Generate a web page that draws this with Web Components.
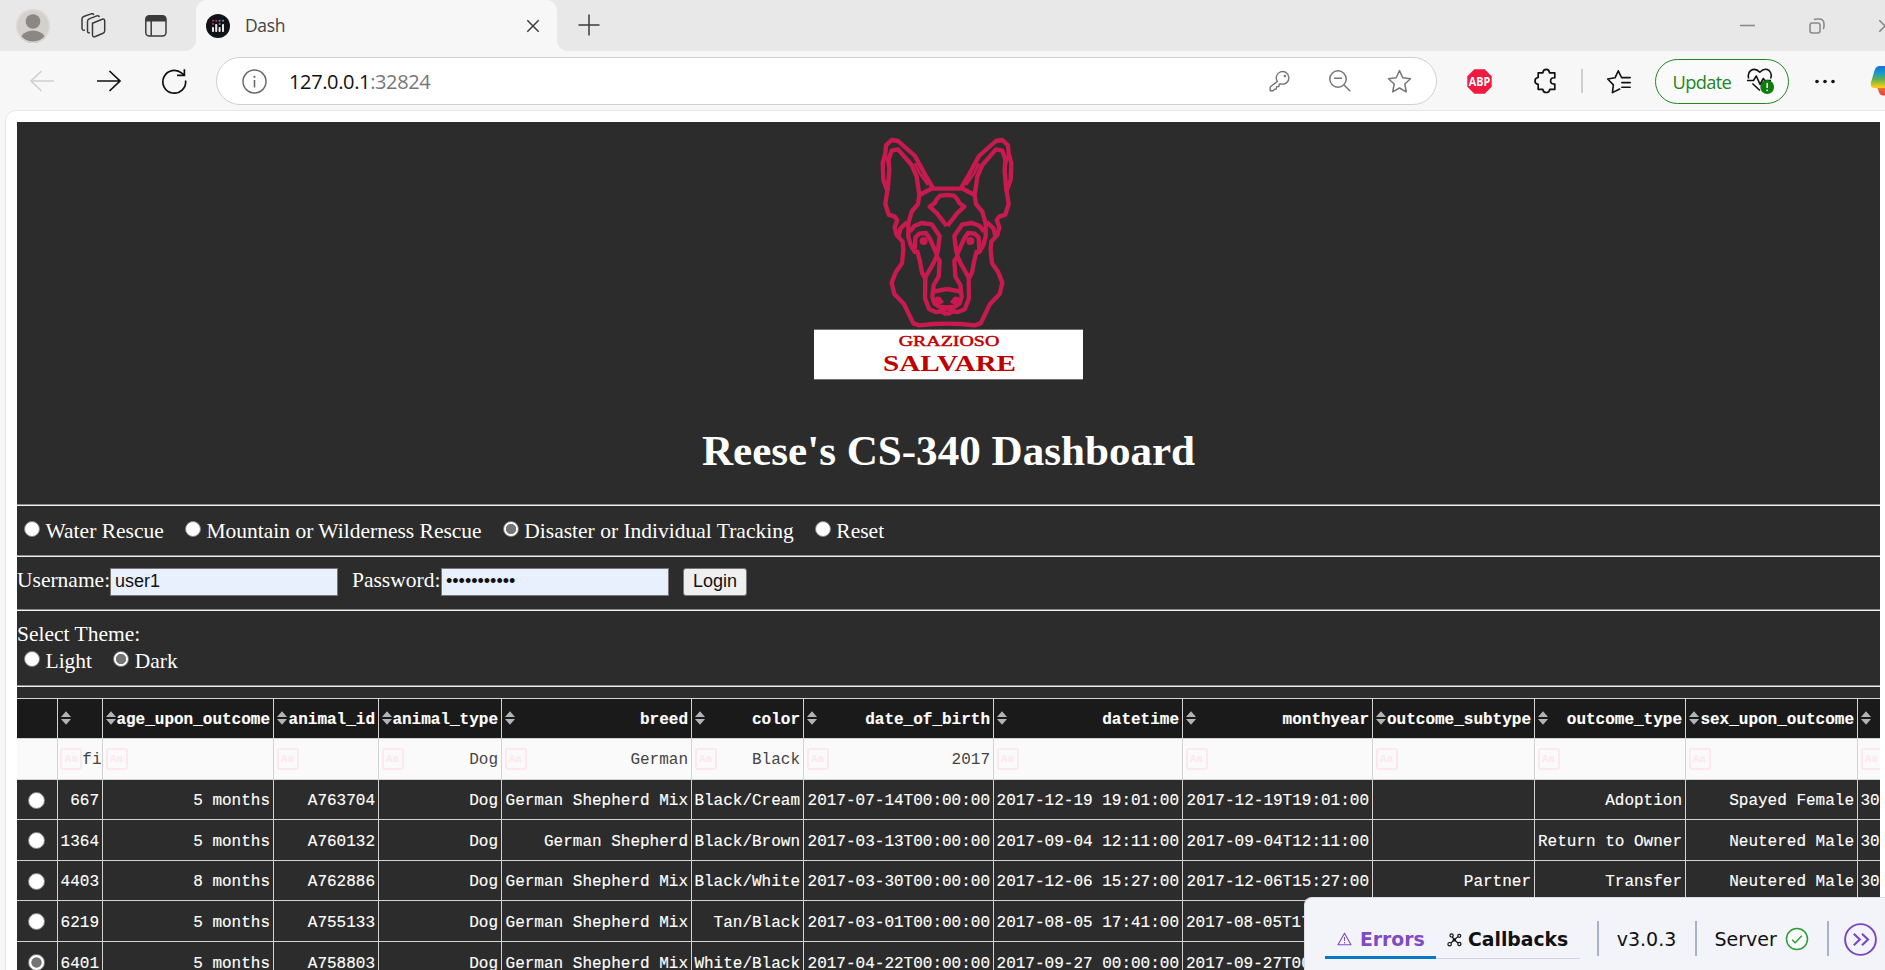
<!DOCTYPE html>
<html lang="en">
<head>
<meta charset="utf-8">
<title>Dash</title>
<style>
html,body{margin:0;width:1885px;height:970px;overflow:hidden;background:#f7f7f7}
</style>
</head>
<body>
<browser-window></browser-window>
<script>
const define = (name, html, init) => customElements.define(name, class extends HTMLElement {
  constructor() {
    super();
    this.attachShadow({mode: 'open'});
  }
  connectedCallback() {
    const t = document.createElement('template');
    t.innerHTML = typeof html === 'function' ? html(this) : html;
    this.shadowRoot.replaceChildren(t.content.cloneNode(true));
    if (init) init(this);
  }
});

/* Icons: [width, height, markup] */
const ICONS = {
  avatar: [34, 34, `<clipPath id="c"><circle cx="17" cy="17" r="17"/></clipPath><g clip-path="url(#c)"><rect width="34" height="34" fill="#d3d1cd"/><circle cx="17" cy="12.5" r="7.3" fill="#8c8783"/><ellipse cx="17" cy="31" rx="12.5" ry="9.5" fill="#8c8783"/></g><circle cx="17" cy="17" r="16.3" fill="none" stroke="#dedcd8" stroke-width="1.4"/>`],
  spaces: [27, 26, `<g fill="none" stroke="#3b3b3b" stroke-width="1.5" stroke-linejoin="round" stroke-linecap="round"><path d="M12.5 10.2l9.7-3.9q2.5-.8 2.5 1.6v9.8q0 1.8-1.7 2.6l-7.6 3.2q-2.9 1-2.9-1.7z"/><path d="M9.3 19.8q-1.8.2-1.8-2V8.5q0-1.8 1.7-2.6l7.6-3q1.6-.6 2.3.6"/><path d="M4.3 17.2q-2.3.2-2.3-2.2V5.9q0-1.8 1.7-2.4l7.3-2.6q1.7-.6 2.5.5"/></g>`],
  panel: [22, 22, `<rect x=".8" y=".8" width="20.2" height="20.2" rx="3.4" fill="none" stroke="#3b3b3b" stroke-width="1.5"/><path d="M1 6.6V4Q1 1 4 1h14q3 0 3 3v2.6z" fill="#3b3b3b"/><path d="M6.2 6v15" stroke="#3b3b3b" stroke-width="1.5"/>`],
  dash: [24, 24, `<circle cx="12" cy="12" r="12" fill="#111316"/><g fill="#e8e8ea"><rect x="6" y="13" width="2" height="5" rx=".7"/><rect x="9.2" y="10" width="2" height="8" rx=".7"/><rect x="12.6" y="13" width="2" height="5" rx=".7"/><rect x="16" y="10" width="2" height="8" rx=".7"/></g><g fill="#c02e62"><circle cx="7" cy="6.8" r="1"/><circle cx="10.2" cy="6.8" r="1"/><circle cx="7" cy="10" r="1"/></g><g fill="#8a76c0"><circle cx="13.6" cy="6.8" r="1"/><circle cx="13.6" cy="10" r="1"/></g><circle cx="17" cy="6.8" r="1" fill="#4aa5d0"/>`],
  close: [14, 14, `<path d="M1.3 1.3l11.4 11.4M12.7 1.3L1.3 12.7" stroke="#3b3b3b" stroke-width="1.5"/>`],
  plus: [22, 22, `<path d="M11 .5v21M.5 11h21" stroke="#3b3b3b" stroke-width="1.5"/>`],
  min: [15, 15, `<path d="M0 7.5h15" stroke="#8b8b8b" stroke-width="1.6"/>`],
  restore: [16, 16, `<g fill="none" stroke="#8b8b8b" stroke-width="1.6"><rect x="1" y="5" width="10" height="10" rx="2.2"/><path d="M5 1.5Q6 1 8 1h2q5 0 5 5v2q0 2-.8 3"/></g>`],
  back: [26, 22, `<path d="M25 11H2M12.5 1L2 11l10.5 10" fill="none" stroke="#d0d0d0" stroke-width="1.6"/>`],
  forward: [26, 22, `<path d="M1 11h23M13.5 1L24 11 13.5 21" fill="none" stroke="#111" stroke-width="1.7"/>`],
  reload: [26, 26, `<path d="M24.6 12.5A11.4 11.4 0 1 1 20.8 5.2L23.6 7.2M23.4 1.2V7.4H16" fill="none" stroke="#111" stroke-width="1.7"/>`],
  info: [25, 25, `<circle cx="12.5" cy="12.5" r="11.5" fill="none" stroke="#6a6a6a" stroke-width="1.5"/><circle cx="12.5" cy="7.8" r="1.1" fill="#6a6a6a"/><path d="M12.5 11v7.5" stroke="#6a6a6a" stroke-width="1.6"/>`],
  key: [22, 22, `<path d="M8.4 11.4A6.3 6.3 0 1 1 12.3 14L10.4 14l-.6 2.6-2.2.2-.3 2.2-1.8.3-1.4 1.5H1.2V17z" fill="none" stroke="#767676" stroke-width="1.4" stroke-linejoin="round"/><circle cx="15.9" cy="6" r="1.3" fill="#767676"/>`],
  zoomout: [22, 22, `<g fill="none" stroke="#767676" stroke-width="1.5"><circle cx="9" cy="9" r="8.2"/><path d="M5 8.3h8M14.8 14.8l6.5 6.5"/></g>`],
  star: [25, 25, `<path d="M12.5 1.6l3.3 7.1 7.7 1-5.7 5.3 1.5 7.8-6.8-3.8-6.8 3.8 1.5-7.8L1.5 9.7l7.7-1z" fill="none" stroke="#767676" stroke-width="1.5" stroke-linejoin="round"/>`],
  abp: [25, 25, `<path d="M7.3.3h10.4l7 7v10.4l-7 7H7.3l-7-7V7.3z" fill="#f0193f"/><text x="12.5" y="17" text-anchor="middle" textLength="21.5" lengthAdjust="spacingAndGlyphs" font-family="Open Sans,sans-serif" font-weight="700" font-size="12.5" fill="#fff">ABP</text>`],
  puzzle: [24, 26, `<path d="M4.2 4.8h4.6q.4-3.5 3.4-3.5t3.4 3.5h5.2v5q-4.2-.4-4.2 3.1t4.2 3.1v5.3h-5q-.6 3.2-3.6 3.2t-3.4-3.2H4.2v-5q-3.2-.5-3.2-3.4t3.2-3.4z" fill="none" stroke="#111" stroke-width="1.7" stroke-linejoin="round"/>`],
  favs: [26, 25, `<g fill="none" stroke="#111" stroke-width="1.6" stroke-linejoin="round" stroke-linecap="round"><path d="M13.7 20l-7.3 3.6 1-7.7L1.7 10l7.3-1.2 3.3-7 3.2 6.7"/><path d="M15.8 8.6h8.4M15.8 13.6h8.4M15.8 18.3h8.4"/></g>`],
  heart: [28, 26, `<g fill="none" stroke="#111" stroke-width="1.6" stroke-linejoin="round"><path d="M1.7 10.5Q.2 5.2 3.8 2.5Q8.5-.5 12.8 4.2Q17.5-.6 22 2.5Q25.7 5.8 23.5 10.5M5.4 15.5l7.5 7M0 12.5h6.500l2.8-4.5 3.8 8.5 3.2-6 1.4 2H24"/></g><circle cx="20.2" cy="19" r="6.9" fill="#107c10"/><path d="M20.2 15v5" stroke="#fff" stroke-width="1.5"/><circle cx="20.2" cy="22.3" r=".9" fill="#fff"/>`],
  more: [20, 5, `<g fill="#111"><circle cx="2" cy="2.5" r="1.8"/><circle cx="10" cy="2.5" r="1.8"/><circle cx="18" cy="2.5" r="1.8"/></g>`],
  copilot: [15, 32, `<defs><linearGradient id="g" x1="0" y1="0" x2="0" y2="1"><stop offset="0" stop-color="#1a6fd4"/><stop offset=".3" stop-color="#1497d8"/><stop offset=".6" stop-color="#61b04c"/><stop offset=".95" stop-color="#f2cf18"/></linearGradient><linearGradient id="h" x1="0" y1="0" x2="0" y2="1"><stop offset="0" stop-color="#f0733a"/><stop offset="1" stop-color="#e2403e"/></linearGradient></defs><path d="M7 22h8v8.5h-2Q9.5 30 8.5 26z" fill="url(#h)"/><path d="M15 1H9.5Q6 1 4.5 5.5L1 17.5Q-.2 23 4.5 23H15z" fill="url(#g)"/>`],
  warn: [15, 14, `<path d="M7.5 1.2L14 12.8H1z" fill="none" stroke="#7f4bc4" stroke-width="1.1" stroke-linejoin="round"/><path d="M7.5 5v4M7.5 10v1.5" stroke="#7f4bc4" stroke-width="1"/>`],
  graph: [15, 14, `<g fill="none" stroke="#111" stroke-width="1.2"><circle cx="2.6" cy="11.2" r="1.7"/><circle cx="4.6" cy="2.4" r="1.6"/><circle cx="12.3" cy="2.8" r="1.5"/><circle cx="12.4" cy="11" r="1.6"/><path d="M4 10l3.3-3.2L11 10M5.3 3.8l2 3L11 3.6"/></g><circle cx="7.3" cy="6.9" r="1.7" fill="#111"/>`],
  check: [24, 24, `<circle cx="12" cy="12" r="10.5" fill="#f9fcf9" stroke="#2f9a3c" stroke-width="1.5"/><path d="M7.2 12.8l3 2.9 6.6-6.9" fill="none" stroke="#2f9a3c" stroke-width="1.5"/>`],
  collapse: [33, 33, `<circle cx="16.5" cy="16.5" r="15.4" fill="none" stroke="#7b44c6" stroke-width="1.9"/><path d="M9.8 10.7l6 5.8-6 5.8M18 10.7l6 5.8-6 5.8" fill="none" stroke="#7b44c6" stroke-width="2.1"/>`],
};
define('ui-icon', el => {
  const [w, h, body] = ICONS[el.getAttribute('name')];
  return `<style>:host{display:block;flex:none;width:${w}px;height:${h}px}svg{display:block}</style><svg width="${w}" height="${h}" viewBox="0 0 ${w} ${h}">${body}</svg>`;
});

define('tab-strip', `<style>
:host{display:flex;align-items:center;height:51px;background:#e8e8e8;font:17.5px "Open Sans","Noto Sans",sans-serif;color:#444}
.tab{display:flex;flex:none;align-items:center;width:361px;height:51px;background:#f7f7f7;border-radius:11px 11px 0 0;position:relative;box-sizing:border-box;padding:0 16.5px 7px 10.5px}
.tab::before,.tab::after{content:"";position:absolute;bottom:0;width:10px;height:10px}
.tab::before{left:-10px;background:radial-gradient(circle at 0 0,transparent 9.5px,#f7f7f7 10px)}
.tab::after{right:-10px;background:radial-gradient(circle at 100% 0,transparent 9.5px,#f7f7f7 10px)}
.tab span{margin-left:15px;flex:1;letter-spacing:-.35px;padding-top:5px}
.tab>ui-icon{margin-top:8px}
</style>
<ui-icon name="avatar" style="margin-left:16px"></ui-icon>
<ui-icon name="spaces" style="margin-left:30px"></ui-icon>
<ui-icon name="panel" style="margin:1px 28.5px 0 38px"></ui-icon>
<div class="tab"><ui-icon name="dash"></ui-icon><span>Dash</span><ui-icon name="close"></ui-icon></div>
<ui-icon name="plus" style="margin:-1px 0 0 21px"></ui-icon>
<ui-icon name="min" style="margin-left:1140.5px"></ui-icon>
<ui-icon name="restore" style="margin-left:54px"></ui-icon>
<ui-icon name="close" style="margin-left:53px;opacity:.6"></ui-icon>`);

define('tool-bar', `<style>
:host{display:flex;align-items:center;height:59px;box-sizing:border-box;background:#f7f7f7;font:20px "Open Sans","Noto Sans",sans-serif;overflow:hidden;padding-top:1px}
.box{display:flex;align-items:center;flex:none;box-sizing:border-box;margin-left:29.5px;width:1221px;height:48px;border:1.5px solid #d0d0d0;border-radius:24px;background:#fff;padding-left:25px}
.url{margin-left:22px;flex:1;color:#767676;letter-spacing:-.36px}.url b{font-weight:400;color:#111}
.sep{flex:none;width:2px;height:24px;background:#cfcfcf;margin-left:22.5px}
.upd{display:flex;align-items:center;flex:none;box-sizing:border-box;margin-left:23px;width:134px;height:45px;border:1.5px solid #228722;border-radius:23px;background:#f9faf9;padding-left:17px;color:#238423;font-size:18.3px}
.upd span{width:74px;letter-spacing:-.65px}
</style>
<ui-icon name="back" style="margin-left:29px"></ui-icon>
<ui-icon name="forward" style="margin-left:40.5px"></ui-icon>
<ui-icon name="reload" style="margin-left:39px"></ui-icon>
<div class="box"><ui-icon name="info"></ui-icon><span class="url"><b>127.0.0.1</b>:32824</span>
<ui-icon name="key"></ui-icon><ui-icon name="zoomout" style="margin-left:38px"></ui-icon><ui-icon name="star" style="margin:0 24.5px 0 36px"></ui-icon></div>
<ui-icon name="abp" style="margin-left:29.5px"></ui-icon>
<ui-icon name="puzzle" style="margin-left:42.5px"></ui-icon>
<div class="sep"></div>
<ui-icon name="favs" style="margin-left:23px"></ui-icon>
<div class="upd"><span>Update</span><ui-icon name="heart"></ui-icon></div>
<ui-icon name="more" style="margin-left:26px"></ui-icon>
<ui-icon name="copilot" style="margin-left:35px"></ui-icon>`);

const half = `
<path d="M441 206H400L373 160L345 108L294 63L275 60L258 76L256 100L248 130L250 180L262 212L256 252L266 284L284 290L292 300L284 322L290 345L308 365L310 390L306 430L288 455L275 488L283 522L312 552L340 610L358 616L400 612L441 611"/>
<path d="M263 212L268 150L266 118L275 92L294 88L335 135L350 170L358 225L398 204"/><path d="M256 98L268 150M345 130L358 158L384 195" stroke-width="8"/>
<path d="M358 225L354 252L335 275L325 310V350L332 375L344 396L346 352L358 341L378 339L390 357L410 402"/>
<path d="M322 306L301 326L296 350M330 335L343 318L365 309L395 313L419 348L414 390L409 410L400 430L375 474L366 458L360 425L351 390"/>
<path d="M410 410L419 422L416 470L401 495L397 530L403 550L418 560L441 562M376 474L375 535L388 568L408 576L424 574L441 584M418 574L430 566L441 568"/>
<path d="M400 515L441 507M440 318L411 280L389 260L405 248L410 238L420 227L441 225"/>
<path d="M409 539L421 548L430 543" stroke-width="9"/><circle cx="414" cy="542" r="6" fill="#c91a50"/><circle cx="371" cy="363" r="12" fill="#c91a50" stroke="none"/>`;
define('brand-logo', `<style>:host{display:block;width:269px;height:246px}svg{display:block}</style>
<svg width="269" height="246" viewBox="42 45 807 738">
<rect x="42" y="629" width="807" height="149" fill="#fff"/>
<g fill="none" stroke="#c91a50" stroke-width="13" stroke-linejoin="round">${half}<g transform="translate(882 0) scale(-1 1)">${half}</g></g>
<g fill="#c00000" font-family="Liberation Serif,serif" font-weight="700">
<text x="296" y="678" font-size="46" font-weight="400" stroke="#c00000" stroke-width="1.5" textLength="302" lengthAdjust="spacingAndGlyphs">GRAZIOSO</text>
<text x="249" y="752" font-size="70" textLength="399" lengthAdjust="spacingAndGlyphs">SALVARE</text></g>
</svg>`);

define('radio-dot', `<style>:host{display:block;flex:none;box-sizing:border-box;width:16px;height:16px;border-radius:50%;border:1px solid #808080;background:#fff}
:host([checked]){background:radial-gradient(circle,#757575 4.8px,#fff 5.5px)}</style>`);
define('radio-option', `<style>:host{display:flex;height:25px;line-height:25px;padding-left:7px;margin-right:14.2px;white-space:nowrap}radio-dot{margin:2px 5.5px 0 0}</style><radio-dot></radio-dot><slot></slot>`,
  el => el.hasAttribute('checked') && el.shadowRoot.querySelector('radio-dot').setAttribute('checked', ''));

define('login-form', `<style>
:host{display:flex;height:52px;box-sizing:border-box;padding-top:11px;line-height:24px;white-space:nowrap}
i{font:18px "Liberation Sans",Arial,sans-serif;line-height:24px;color:#111;box-sizing:border-box;height:28px;border:1.5px solid #767676;background:#e8f0fe;width:228px;padding-left:4px}
span{box-sizing:border-box;height:24px}
.b{width:64px;background:#efefef;border-radius:3px;padding:0;text-align:center;margin-left:14px}
</style><span style="width:93px">Username:</span><i>user1</i><span style="width:103px;padding-left:14px">Password:</span><i>•••••••••••</i><i class="b">Login</i>`);

const COLS = ['', 'age_upon_outcome', 'animal_id', 'animal_type', 'breed', 'color', 'date_of_birth', 'datetime', 'monthyear', 'outcome_subtype', 'outcome_type', 'sex_upon_outcome', ' '];
const FILTERS = ['fi', '', '', 'Dog', 'German', 'Black', '2017', '', '', '', '', '', ''];
const ROWS = [
  ['667', '5 months', 'A763704', 'Dog', 'German Shepherd Mix', 'Black/Cream', '2017-07-14T00:00:00', '2017-12-19 19:01:00', '2017-12-19T19:01:00', '', 'Adoption', 'Spayed Female', '30'],
  ['1364', '5 months', 'A760132', 'Dog', 'German Shepherd', 'Black/Brown', '2017-03-13T00:00:00', '2017-09-04 12:11:00', '2017-09-04T12:11:00', '', 'Return to Owner', 'Neutered Male', '30'],
  ['4403', '8 months', 'A762886', 'Dog', 'German Shepherd Mix', 'Black/White', '2017-03-30T00:00:00', '2017-12-06 15:27:00', '2017-12-06T15:27:00', 'Partner', 'Transfer', 'Neutered Male', '30'],
  ['6219', '5 months', 'A755133', 'Dog', 'German Shepherd Mix', 'Tan/Black', '2017-03-01T00:00:00', '2017-08-05 17:41:00', '2017-08-05T17', '', '', '', ''],
  ['6401', '5 months', 'A758803', 'Dog', 'German Shepherd Mix', 'White/Black', '2017-04-22T00:00:00', '2017-09-27 00:00:00', '2017-09-27T00', '', '', '', ''],
];
const cell = (cls, inner) => `<div class="c ${cls}">${inner}</div>`;
define('data-grid', () => `<style>
:host{display:grid;grid-template-columns:41px 45px 171px 105px 123px 190px 112px 190px 189px 190px 162px 151px 172px 22px;grid-template-rows:40px 41px 40px 41px 40px 41px 41px;border-top:1px solid #d3d3d3;font:16px "Liberation Mono","Courier New",monospace;color:#fff;width:1863px;overflow:hidden}
.c{box-sizing:border-box;border-right:1px solid #d3d3d3;border-bottom:1px solid #d3d3d3;padding:3px 3px 0 2.5px;display:flex;align-items:center;justify-content:flex-end;white-space:pre;min-width:0;-webkit-text-stroke:.15px}
.h{background:#1a1a1a;font-weight:700}.f{background:#fafafa;color:#444;-webkit-text-stroke:0;padding-top:1px}
.n{padding-right:.5px}
.r{justify-content:center;padding:1px 1px 0 0}
.r radio-dot{width:17px;height:17px}
.l{padding-right:0;border-right:0;justify-content:flex-start}
.h svg{margin:-5px auto 0 0;flex:none}
.f i{font:700 11px/19px "Liberation Mono",monospace;box-sizing:border-box;width:22px;height:22px;border:2px solid #fce8ee;border-radius:3px;color:#fce8ee;text-align:center;margin:-1px auto 0 0;flex:none}
</style>` + cell('h', '')
  + COLS.map((t, i) => cell('h' + (i == 12 ? ' l' : ''), `<svg width="10" height="14"><path d="M0 6L5 .3 10 6zM0 8L5 13.7 10 8z" fill="#b4b4b4"/></svg>${t.trim()}`)).join('')
  + cell('f', '')
  + FILTERS.map((t, i) => cell('f' + (i == 12 ? ' l' : i ? '' : ' n'), `<i>Aa</i>${t}`)).join('')
  + ROWS.map((r, n) => cell('r', `<radio-dot${n == 4 ? ' checked' : ''}></radio-dot>`) + r.map((t, i) => cell(i == 12 ? 'l' : '', n > 2 && i == 8 ? `<span style="width:183px">${t}</span>` : t)).join('')).join(''));

define('dash-app', `<style>
:host{display:flex;flex-direction:column;width:1863px;height:848px;background:#2c2c2c;color:#fff;font:21.5px "Liberation Serif","Times New Roman",serif;overflow:hidden}
:host>*,brand-logo,h1,.row,login-form,data-grid{flex-shrink:0}
brand-logo{margin:13px auto 0}
h1{font-size:43.1px;line-height:48px;margin:46px 0 0;text-align:center;height:77px}
hr{margin:0;border:0;height:2px;flex:none;background:linear-gradient(#8c8c8c 50%,#f0f0f0 50%);width:100%}
.row{display:flex;box-sizing:border-box}
.s{line-height:24px}
</style>
<brand-logo></brand-logo><h1>Reese's CS-340 Dashboard</h1>
<hr><div class="row" style="height:49px;padding-top:13px"><radio-option>Water Rescue</radio-option><radio-option>Mountain or Wilderness Rescue</radio-option><radio-option checked>Disaster or Individual Tracking</radio-option><radio-option>Reset</radio-option></div>
<hr><login-form></login-form>
<hr><div class="row" style="height:38px;padding-top:11px"><span class="s">Select Theme:</span></div><div class="row" style="height:36px"><radio-option>Light</radio-option><radio-option checked>Dark</radio-option></div>
<hr><data-grid style="margin-top:11px"></data-grid>`);

define('dev-tools', `<style>
:host{display:flex;box-sizing:border-box;width:581px;height:73px;background:#f3f4fa;border:1px solid #dcdde8;border-width:1px 0 0 1px;border-radius:8px 0 0 0;padding:23px 0 0 20px;font:19px/36px "DejaVu Sans",Verdana,sans-serif;color:#111}
.t{display:flex;align-items:center;box-sizing:border-box;height:38px;font-weight:700;font-size:18.8px;border-bottom:1px solid #d3d6e8;padding-left:11px}
.e{width:111px;color:#7f4bc4;border-bottom:3px solid #0a76c8;padding-left:11.5px}.t span{margin-left:8.5px}
.e span{padding-top:2px}.v{width:2px;height:35px;background:#aab0cf}
.i{display:flex;align-items:center;height:36px}
</style><div class="t e"><ui-icon name="warn"></ui-icon><span>Errors</span></div><div class="t" style="width:144px"><ui-icon name="graph"></ui-icon><span style="margin-left:6px">Callbacks</span></div>
<div class="v" style="margin-left:16.5px"></div><div class="i" style="width:96px;justify-content:center">v3.0.3</div><div class="v"></div>
<div class="i" style="width:130px;padding-left:18px;box-sizing:border-box">Server<ui-icon name="check" style="margin-left:8px"></ui-icon></div><div class="v"></div><div class="i"><ui-icon name="collapse" style="margin-left:15px"></ui-icon></div>`);

define('browser-window', `<style>
:host{display:block;position:relative;width:1885px;height:970px;overflow:hidden}
.page{box-sizing:border-box;margin-left:5px;width:1890px;height:861px;background:#fff;border:1px solid #e6e6e6;border-radius:11px 0 0 0;padding:11px 0 0 11px}
dev-tools{position:absolute;right:0;bottom:0}
</style><tab-strip></tab-strip><tool-bar></tool-bar><div class="page"><dash-app></dash-app></div><dev-tools></dev-tools>`);
</script>
</body>
</html>
